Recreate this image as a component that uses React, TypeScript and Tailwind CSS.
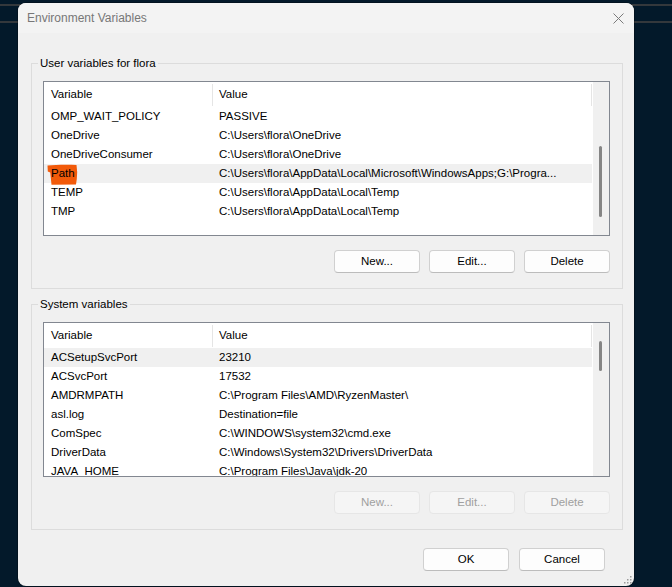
import React from "react";

type Row = { name: string; value: string };

const USER_ROWS: Row[] = [
	{ name: "OMP_WAIT_POLICY", value: "PASSIVE" },
	{ name: "OneDrive", value: "C:\\Users\\flora\\OneDrive" },
	{ name: "OneDriveConsumer", value: "C:\\Users\\flora\\OneDrive" },
	{
		name: "Path",
		value: "C:\\Users\\flora\\AppData\\Local\\Microsoft\\WindowsApps;G:\\Progra...",
	},
	{ name: "TEMP", value: "C:\\Users\\flora\\AppData\\Local\\Temp" },
	{ name: "TMP", value: "C:\\Users\\flora\\AppData\\Local\\Temp" },
];

const SYSTEM_ROWS: Row[] = [
	{ name: "ACSetupSvcPort", value: "23210" },
	{ name: "ACSvcPort", value: "17532" },
	{ name: "AMDRMPATH", value: "C:\\Program Files\\AMD\\RyzenMaster\\" },
	{ name: "asl.log", value: "Destination=file" },
	{ name: "ComSpec", value: "C:\\WINDOWS\\system32\\cmd.exe" },
	{ name: "DriverData", value: "C:\\Windows\\System32\\Drivers\\DriverData" },
	{ name: "JAVA_HOME", value: "C:\\Program Files\\Java\\jdk-20" },
];

const FONT = "font-['Liberation_Sans',Arial,sans-serif]";

// Hand-drawn marker scribble over the "Path" entry
function Marker() {
	return (
		<svg
			className="absolute left-[3px] top-[-1px] h-[21px] w-[31px]"
			viewBox="0 0 31 21"
		>
			<path
				d="M0.5 1.5 C8 0.8 20 0.6 29.5 1 L30.2 8 L29.8 15 L29 20.6 L4.5 20.8 L3.8 14 L3.2 8.5 L0.8 7.5 Z"
				fill="#f25a0a"
			/>
		</svg>
	);
}

function VarList({
	rows,
	selected,
	marked,
	thumbClass,
}: {
	rows: Row[];
	selected: number;
	marked?: number;
	thumbClass: string;
}) {
	return (
		<div className="flex h-[155px] border border-[#828790] bg-white">
			<div className="flex min-w-0 flex-1 flex-col overflow-hidden">
				{/* Column headers */}
				<div className="flex h-[25px] shrink-0 items-center">
					<div className="w-[168px] pl-[7px]">Variable</div>
					<div className="h-[22px] w-px bg-[#e5e5e5]" />
					<div className="flex-1 pl-[6px]">Value</div>
					<div className="h-[22px] w-px bg-[#e5e5e5]" />
				</div>
				{rows.map((row, i) => (
					<div
						key={row.name}
						className={
							i === selected
								? "flex h-[19px] shrink-0 items-center bg-[#f0f0f0]"
								: "flex h-[19px] shrink-0 items-center"
						}
					>
						<div className="relative w-[169px] shrink-0 pl-[7px]">
							{i === marked && <Marker />}
							<span className="relative">{row.name}</span>
						</div>
						<div className="min-w-0 flex-1 truncate pl-[6px]">{row.value}</div>
					</div>
				))}
			</div>
			{/* Scrollbar */}
			<div className="flex w-[17px] shrink-0 flex-col border-l border-white bg-[#f0f0f0] pl-[6px]">
				<div className={thumbClass} />
			</div>
		</div>
	);
}

function WinButton({
	children,
	disabled,
}: {
	children: React.ReactNode;
	disabled?: boolean;
}) {
	return (
		<button
			className={
				disabled
					? "h-[23px] w-[86px] rounded-[4px] border border-[#e6e6e6] bg-[#f5f5f5] text-[#a0a0a0]"
					: "h-[23px] w-[86px] rounded-[4px] border border-[#d0d0d0] border-b-[#bcbcbc] bg-[#fdfdfd] text-black"
			}
		>
			{children}
		</button>
	);
}

function GroupBox({
	title,
	children,
}: {
	title: string;
	children: React.ReactNode;
}) {
	return (
		<fieldset className="border border-[#dcdcdc] pb-[15px] pl-[11px] pr-[12px]">
			<legend className="ml-[-5px] px-[2px] leading-[14px]">{title}</legend>
			{children}
		</fieldset>
	);
}

export default function App() {
	return (
		<div
			className={`relative h-[587px] w-[672px] overflow-hidden bg-[#03192a] ${FONT}`}
		>
			{/* Windows behind the dialog */}
			<div className="absolute inset-x-0 top-[4px] h-[2px] bg-[#34383c]" />
			<div className="absolute inset-x-0 top-[21px] h-[2px] bg-[#34383c]" />

			<div className="relative ml-[18px] mt-[3px] flex h-[583px] w-[616px] flex-col overflow-hidden rounded-[8px] bg-[#f0f0f0] text-[11.5px] text-black shadow-[0_0_0_1px_rgba(0,0,0,0.25)]">
				{/* Title bar */}
				<div className="flex h-[30px] shrink-0 items-center justify-between bg-[#f3f3f3] pl-[9px] pr-[10px]">
					<span className="text-[12px] text-[#777777]">Environment Variables</span>
					<svg width="11" height="11" viewBox="0 0 11 11">
						<path
							d="M0.5 0.5 L10.5 10.5 M10.5 0.5 L0.5 10.5"
							stroke="#7a7a7a"
							strokeWidth="1"
						/>
					</svg>
				</div>

				<div className="flex flex-1 flex-col pl-[13px] pr-[11px] pt-[23px]">
					<GroupBox title="User variables for flora">
						<div className="mt-[11px]">
							<VarList
								rows={USER_ROWS}
								selected={3}
								marked={3}
								thumbClass="mt-[64px] h-[71px] w-[3px] rounded-full bg-[#858585]"
							/>
						</div>
						<div className="mt-[14px] flex justify-end gap-[9px]">
							<WinButton>New...</WinButton>
							<WinButton>Edit...</WinButton>
							<WinButton>Delete</WinButton>
						</div>
					</GroupBox>

					<div className="mt-[8px]">
						<GroupBox title="System variables">
							<div className="mt-[11px]">
								<VarList
									rows={SYSTEM_ROWS}
									selected={0}
									thumbClass="mt-[18px] h-[30px] w-[3px] rounded-full bg-[#858585]"
								/>
							</div>
							<div className="mt-[14px] flex justify-end gap-[9px]">
								<WinButton disabled>New...</WinButton>
								<WinButton disabled>Edit...</WinButton>
								<WinButton disabled>Delete</WinButton>
							</div>
						</GroupBox>
					</div>

					{/* Dialog buttons */}
					<div className="mt-[18px] flex justify-end gap-[10px] pr-[18px]">
						<WinButton>OK</WinButton>
						<WinButton>Cancel</WinButton>
					</div>
				</div>

				{/* Resize grip */}
				<svg
					className="absolute bottom-[2px] right-[2px]"
					width="8"
					height="8"
					viewBox="0 0 8 8"
				>
					<rect x="6" y="0" width="1.5" height="1.5" fill="#9a9a9a" />
					<rect x="3" y="3" width="1.5" height="1.5" fill="#9a9a9a" />
					<rect x="6" y="3" width="1.5" height="1.5" fill="#9a9a9a" />
					<rect x="0" y="6" width="1.5" height="1.5" fill="#9a9a9a" />
					<rect x="3" y="6" width="1.5" height="1.5" fill="#9a9a9a" />
					<rect x="6" y="6" width="1.5" height="1.5" fill="#9a9a9a" />
				</svg>
			</div>
		</div>
	);
}
